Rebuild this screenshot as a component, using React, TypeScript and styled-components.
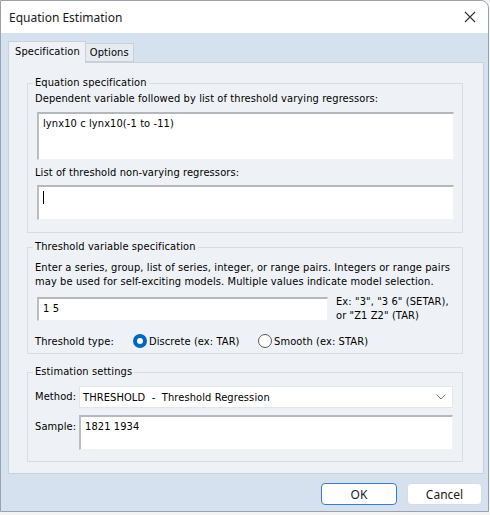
import React from "react";
import styled, { createGlobalStyle } from "styled-components";

const GlobalStyle = createGlobalStyle`
  html, body { margin: 0; padding: 0; background: #f4f4f4; }
  body {
    font-family: "DejaVu Sans Condensed", "DejaVu Sans", sans-serif;
    font-size: 11px;
    letter-spacing: 0.1px;
    color: #000;
  }
  * { box-sizing: border-box; }
`;

const Window = styled.div`
  width: 489px;
  height: 512px;
  border: 1px solid #9aa3ad;
  border-radius: 0 8px 0 0;
  display: flex;
  flex-direction: column;
  overflow: hidden;
  background: #d6e1f0;
`;

const TitleBar = styled.div`
  height: 32px;
  flex: none;
  background: #fff;
  display: flex;
  align-items: center;
  justify-content: space-between;
  padding: 0 12px 0 8px;
  font-family: "Noto Sans", "Open Sans", sans-serif;
  font-size: 12px;
  letter-spacing: 0;
  color: #1a1a1a;
`;

const Body = styled.div`
  flex: 1;
  display: flex;
  flex-direction: column;
  padding: 8px 4px 0 7px;
`;

const TabRow = styled.div`
  display: flex;
  align-items: flex-end;
  height: 21px;
  position: relative;
  z-index: 1;
`;

const Tab = styled.div<{ $active?: boolean }>`
  height: ${(p) => (p.$active ? "22px" : "19px")};
  margin-bottom: ${(p) => (p.$active ? "-1px" : "0")};
  padding: ${(p) => (p.$active ? "3px 5px 0 6px" : "2px 4px 0 4px")};
  background: ${(p) => (p.$active ? "#eef2f7" : "#e6ebf1")};
  border: 1px solid #c9d0da;
  border-bottom: ${(p) => (p.$active ? "none" : "1px solid #c9d0da")};
  border-left: ${(p) => (p.$active ? "1px solid #c9d0da" : "none")};
  color: #000;
  white-space: nowrap;
`;

const Panel = styled.div`
  height: 412px;
  background: #eef2f7;
  border: 1px solid #c9d0da;
  padding: 13px 20px 0 18px;
  display: flex;
  flex-direction: column;
`;

const Group = styled.fieldset<{ $gap?: number; $bottom?: number }>`
  margin: ${(p) => p.$gap ?? 0}px 0 0 0;
  padding: 0 8px ${(p) => p.$bottom ?? 12}px 7px;
  border: 1px solid #d9dde3;
  min-width: 0;
  display: flex;
  flex-direction: column;
`;

const Legend = styled.legend`
  padding: 0 2px;
  margin-left: -2px;
  line-height: 14px;
  color: #000;
`;

const Line = styled.div<{ $top?: number }>`
  line-height: 14px;
  margin-top: ${(p) => p.$top ?? 0}px;
  white-space: nowrap;
`;

const TextBox = styled.div<{ $h: number; $top?: number; $left?: number; $w?: number }>`
  height: ${(p) => p.$h}px;
  width: ${(p) => (p.$w ? `${p.$w}px` : "auto")};
  flex: none;
  margin-top: ${(p) => p.$top ?? 0}px;
  margin-left: ${(p) => p.$left ?? 2}px;
  background: #fff;
  border-top: 2px solid #b4b7bb;
  border-left: 2px solid #b9bcc0;
  border-right: 1px solid #f1f3f5;
  border-bottom: 1px solid #f1f3f5;
  padding: 3px 4px;
  line-height: 14px;
  white-space: nowrap;
`;

const Caret = styled.span`
  display: inline-block;
  width: 1px;
  height: 13px;
  background: #000;
  vertical-align: top;
  margin-top: 1px;
`;

const InputRow = styled.div`
  display: flex;
  align-items: center;
  margin-top: 6px;
  gap: 8px;
`;

const Hint = styled.div`
  line-height: 14px;
  white-space: nowrap;
`;

const TypeRow = styled.div`
  display: flex;
  align-items: center;
  margin-top: 11px;
  height: 14px;
`;

const TypeLabel = styled.div`
  width: 98px;
  white-space: nowrap;
`;

const RadioItem = styled.label<{ $w?: number }>`
  display: flex;
  align-items: center;
  gap: 2px;
  width: ${(p) => (p.$w ? `${p.$w}px` : "auto")};
  white-space: nowrap;
`;

const RadioDot = styled.span<{ $on?: boolean }>`
  width: 14px;
  height: 14px;
  border-radius: 50%;
  flex: none;
  display: flex;
  align-items: center;
  justify-content: center;
  background: ${(p) => (p.$on ? "#0067c0" : "#fff")};
  border: ${(p) => (p.$on ? "none" : "1px solid #5a5a5a")};
  &::after {
    content: "";
    width: 6px;
    height: 6px;
    border-radius: 50%;
    background: #fff;
    display: ${(p) => (p.$on ? "block" : "none")};
  }
`;

const FieldGrid = styled.div<{ $top?: number }>`
  display: grid;
  grid-template-columns: 44px 1fr;
  margin-top: ${(p) => p.$top ?? 0}px;
  margin-right: 1px;
`;

const FieldLabel = styled.div<{ $center?: boolean }>`
  line-height: 14px;
  align-self: ${(p) => (p.$center ? "center" : "start")};
  padding-top: ${(p) => (p.$center ? 0 : 5)}px;
`;

const Select = styled.div`
  height: 22px;
  background: #fff;
  border: 1px solid #e2e5e9;
  display: flex;
  align-items: center;
  justify-content: space-between;
  padding: 0 6px 0 3px;
`;

const Footer = styled.div`
  display: flex;
  justify-content: flex-end;
  gap: 10px;
  padding: 9px 2px 0 0;
`;

const Button = styled.button<{ $default?: boolean }>`
  width: ${(p) => (p.$default ? 76 : 75)}px;
  height: 22px;
  background: #fff;
  border: 1px solid ${(p) => (p.$default ? "#3a7fc6" : "#d8dce1")};
  border-radius: 4px;
  font-family: "Noto Sans", "Open Sans", sans-serif;
  font-size: 12px;
  color: #1a1a1a;
  padding: 0;
`;

export default function App() {
  return (
    <>
      <GlobalStyle />
      <Window>
        <TitleBar>
          <span>Equation Estimation</span>
          <svg width="12" height="12" viewBox="0 0 12 12">
            <path d="M1 1 L11 11 M11 1 L1 11" stroke="#333" strokeWidth="1.1" fill="none" />
          </svg>
        </TitleBar>
        <Body>
          <TabRow>
            <Tab $active>Specification</Tab>
            <Tab>Options</Tab>
          </TabRow>
          <Panel>
            <Group>
              <Legend>Equation specification</Legend>
              <Line $top={2}>Dependent variable followed by list of threshold varying regressors:</Line>
              <TextBox $h={48} $top={6}>lynx10 c lynx10(-1 to -11)</TextBox>
              <Line $top={6}>List of threshold non-varying regressors:</Line>
              <TextBox $h={35} $top={5}>
                <Caret />
              </TextBox>
            </Group>
            <Group $gap={7} $bottom={5}>
              <Legend>Threshold variable specification</Legend>
              <Line $top={7}>Enter a series, group, list of series, integer, or range pairs. Integers or range pairs</Line>
              <Line>may be used for self-exciting models. Multiple values indicate model selection.</Line>
              <InputRow>
                <TextBox $h={24} $w={291}>1 5</TextBox>
                <div>
                  <Hint>Ex: "3", "3 6" (SETAR),</Hint>
                  <Hint>or "Z1 Z2" (TAR)</Hint>
                </div>
              </InputRow>
              <TypeRow>
                <TypeLabel>Threshold type:</TypeLabel>
                <RadioItem $w={125}>
                  <RadioDot $on />
                  Discrete (ex: TAR)
                </RadioItem>
                <RadioItem>
                  <RadioDot />
                  Smooth (ex: STAR)
                </RadioItem>
              </TypeRow>
            </Group>
            <Group $gap={11} $bottom={11}>
              <Legend>Estimation settings</Legend>
              <FieldGrid $top={7}>
                <FieldLabel $center>Method:</FieldLabel>
                <Select>
                  <span>THRESHOLD&nbsp; - &nbsp;Threshold Regression</span>
                  <svg width="10" height="6" viewBox="0 0 10 6">
                    <path d="M0.5 0.5 L5 5 L9.5 0.5" stroke="#777" strokeWidth="1" fill="none" />
                  </svg>
                </Select>
              </FieldGrid>
              <FieldGrid $top={7}>
                <FieldLabel>Sample:</FieldLabel>
                <TextBox $h={35} $left={0}>1821 1934</TextBox>
              </FieldGrid>
            </Group>
          </Panel>
          <Footer>
            <Button $default>OK</Button>
            <Button>Cancel</Button>
          </Footer>
        </Body>
      </Window>
    </>
  );
}
